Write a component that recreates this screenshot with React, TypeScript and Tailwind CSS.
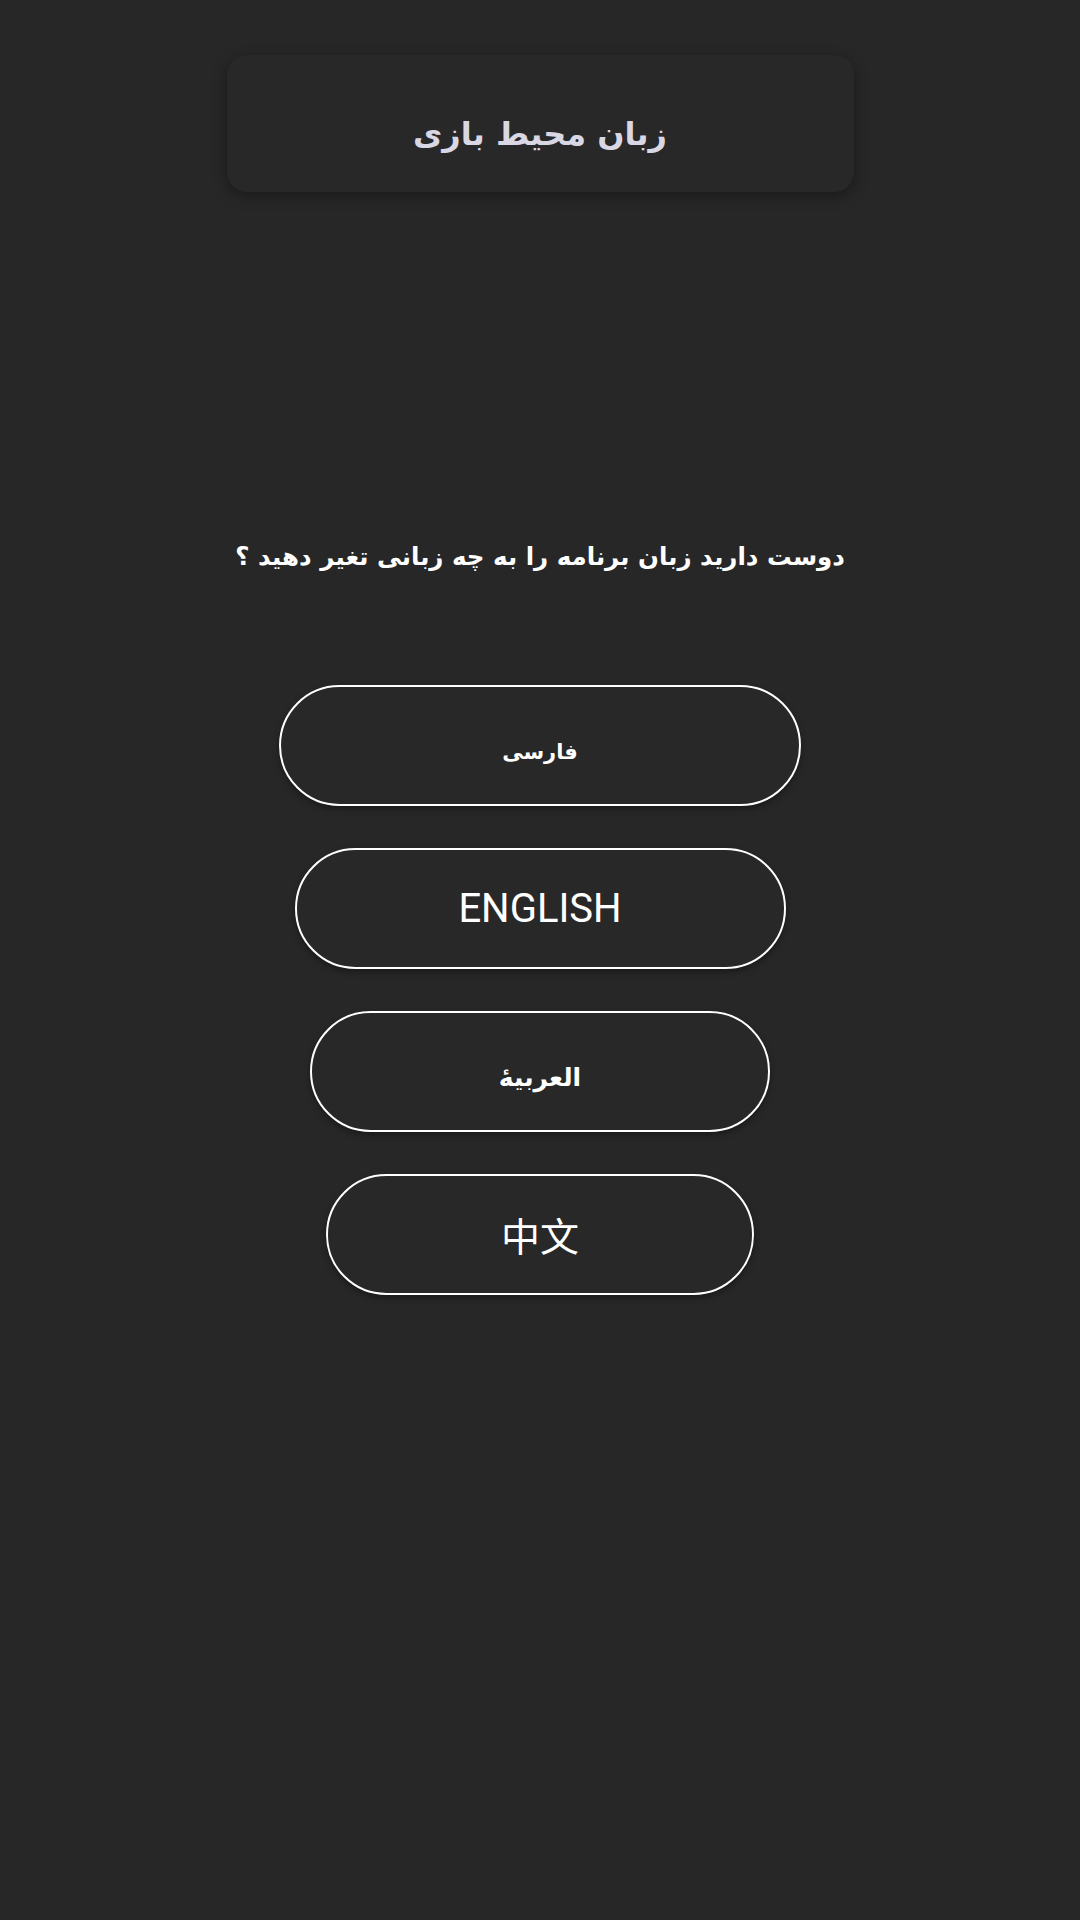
const languages = [
  { label: 'فارسی', width: 'w-[522px]', text: 'text-[21px] font-bold pt-[14px]', font: 'fa' },
  { label: 'ENGLISH', width: 'w-[491px]', text: 'text-[40px] font-normal', font: 'en' },
  { label: 'العربيۀ', width: 'w-[460px]', text: 'text-[25px] font-bold pt-[12px]', font: 'fa' },
  { label: '中文', width: 'w-[428px]', text: 'text-[39px] font-normal', font: 'cjk' },
];

const fontFor = (f: string) => {
  if (f === 'en') return "font-['Roboto','Liberation_Sans',sans-serif]";
  if (f === 'cjk') return "font-['Noto_Sans_CJK_SC','Noto_Sans',sans-serif]";
  return "font-['DejaVu_Sans','Noto_Sans',sans-serif]";
};

export default function App() {
  return (
    <div className="min-h-[1920px] w-full bg-[#272727] flex flex-col items-center">
      {/* header card */}
      <div className="mt-[55px] w-[627px] h-[137px] rounded-[20px] bg-[#282828] shadow-[0_4px_14px_rgba(0,0,0,0.35)] flex items-center justify-center">
        <h1
          dir="rtl"
          className="pt-[20px] text-[32px] font-bold text-[#d9d7e4] font-['DejaVu_Sans','Noto_Sans',sans-serif]"
        >
          زبان محیط بازی
        </h1>
      </div>

      {/* question */}
      <p
        dir="rtl"
        className="mt-[347px] text-[24.5px] font-bold text-white leading-[36px] font-['DejaVu_Sans','Noto_Sans',sans-serif]"
      >
        دوست دارید زبان برنامه را به چه زبانی تغیر دهید ؟
      </p>

      {/* language buttons */}
      <div className="mt-[110px] flex flex-col items-center gap-[42px]">
        {languages.map((lang) => (
          <button
            key={lang.label}
            className={`${lang.width} h-[121px] rounded-full border-2 border-white bg-[#282828] text-white shadow-[0_3px_6px_rgba(0,0,0,0.35)] flex items-center justify-center ${lang.text} ${fontFor(lang.font)}`}
          >
            {lang.label}
          </button>
        ))}
      </div>
    </div>
  );
}
